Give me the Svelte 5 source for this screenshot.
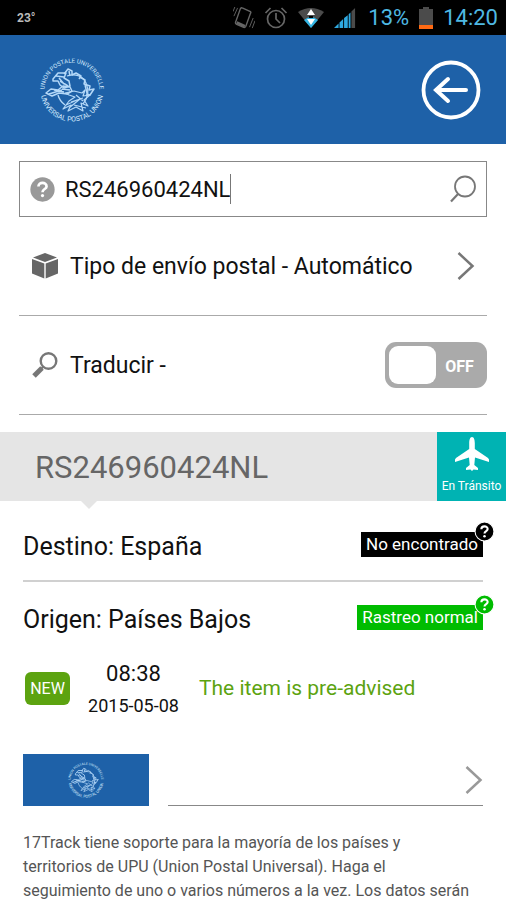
<script>
  let code = $state('RS246960424NL');
  let translate = $state(false);
  const year = '2015-05-08';
</script>

{#snippet emblem()}
  <svg class="emblem" viewBox="0 0 68 68" role="img" aria-label="Union Postale Universelle">
    <defs>
      <path id="arc-top" d="M7.100 40 A27.500 27.500 0 1 1 60.900 40" />
      <path id="arc-bottom" d="M2.500 34 A31.500 31.500 0 0 0 65.500 34" />
    </defs>
    <g class="ring">
      <text text-anchor="middle"><textPath href="#arc-top" startOffset="50%">UNION POSTALE UNIVERSELLE</textPath></text>
      <text class="lower" text-anchor="middle"><textPath href="#arc-bottom" startOffset="50%">UNIVERSAL POSTAL UNION</textPath></text>
    </g>
    <g class="figures">
      <path d="M29 20C37 17 45 20 48 27C51 34 50 42 45 48M20 39C21 43 23 46 27 49" stroke-width="1.300" />
      <path d="M8 37L13 33L20 34L25 30L32 31L34 35L29 38L21 37L14 40ZM11 38L24 34M16 34L26 36M24 33L32 34" stroke-width="1.500" />
      <path d="M15 23L20 17L28 17L26 22L31 25L32 30L26 32L22 29L20 25L15 25ZM18 20L26 21M22 25L30 30M21 22L26 28" stroke-width="1.500" />
      <path d="M26 18L30 13L34 15L34 19L38 17L43 20L41 23M31 15L32 20M42 21L47 24L46 28L52 30L51 34L56 33L52 39L48 38M47 29L49 37" stroke-width="1.500" />
      <path d="M27 37L36 35L44 37L47 34L45 40L52 39L46 44L50 50L43 47L45 55L38 51L30 55L33 49L25 53L31 45L37 41L31 39ZM33 46L45 42M31 52L42 43M36 49L48 52M28 49L39 44M38 39L45 45" stroke-width="1.200" />
    </g>
  </svg>
{/snippet}

{#snippet question(size)}
  <svg class={size} viewBox="0 0 20 20" aria-hidden="true">
    <circle class="disc" cx="10" cy="10" r="9" />
    <path d="M7 7.800C7 4.200 13 4.200 13 7.700C13 9.700 10 9.600 10 12" fill="none" stroke="#fff" stroke-width="2" />
    <circle cx="10" cy="14.500" r="1.200" fill="#fff" />
  </svg>
{/snippet}

{#snippet chevron(colour)}
  <svg class="chevron" viewBox="0 0 18 30" fill="none" stroke={colour} stroke-width="2.500" aria-hidden="true">
    <path d="M1.500 2L15.500 15L1.500 28" />
  </svg>
{/snippet}

<div class="page">
  <div class="status">
    <span class="temp">23°</span>
    <div class="tray">
      <svg width="22" height="24" viewBox="0 0 24 26" fill="none" stroke="#666" stroke-width="1.500" aria-hidden="true">
        <path d="M10 2L19 6Q20 7 19 8L14 22Q13 24 11 23L4 20Q2 19 3 17L8 3Q9 1.500 10 2Z" />
        <path d="M4 18L13 22" stroke-width="3" />
        <path d="M5 2L1 11M2 1L0 6M22 13L18 23M24 16L21 24" stroke-width="1" />
      </svg>
      <svg width="24" height="24" viewBox="0 0 24 24" fill="none" stroke="#666" stroke-width="1.700" aria-hidden="true">
        <circle cx="12" cy="13" r="8.500" /><path d="M12 7V13L16 17M1.500 7L6.500 2M17.500 2L22.500 7" />
      </svg>
      <svg width="28" height="24" viewBox="0 0 28 24" aria-hidden="true">
        <path d="M1 6Q14 -2 27 6L14 22Z" fill="#4b4b4b" />
        <path d="M7 14Q14 8 21 14L14 22Z" fill="#33b5e5" />
        <path d="M14 3L18 9H10ZM10 13H18L14 19Z" fill="#fff" /><path d="M12 10H16V12H12Z" fill="#000" />
      </svg>
      <svg width="22" height="24" viewBox="0 0 24 24" aria-hidden="true">
        <path d="M0 23L5 18V23ZM6 17L10 13V23H6ZM11 12L15 9V23H11ZM16 8L18 6V23H16Z" fill="#2fa9e0" />
        <path d="M19 5L23 1V23H19Z" fill="#4b4b4b" />
      </svg>
      <span class="clock pct">13%</span>
      <svg width="16" height="24" viewBox="0 0 16 24" aria-hidden="true">
        <path d="M5 1H11V3H15V19H1V3H5Z" fill="#4b4b4b" /><path d="M1 19H15V23H1Z" fill="#ff6a13" />
      </svg>
      <span class="clock">14:20</span>
    </div>
  </div>

  <header>
    <div class="brand">{@render emblem()}</div>
    <button class="back" aria-label="Volver">
      <svg viewBox="0 0 60 60" fill="none" stroke="#fff" aria-hidden="true">
        <circle cx="30" cy="30" r="27.500" stroke-width="3.800" />
        <path d="M45 30H16M27 19L15 30L27 41" stroke-width="4" stroke-linecap="round" />
      </svg>
    </button>
  </header>

  <main>
    <section class="form">
      <div class="search">
        {@render question('help')}
        <div class="entry">
          <input type="text" aria-label="Número de envío" bind:value={code} />
          <span class="caret"></span>
        </div>
        <button class="find" aria-label="Buscar">
          <svg viewBox="0 0 28 28" fill="none" stroke="#777" stroke-width="1.800" aria-hidden="true">
            <circle cx="16" cy="11.500" r="10" /><path d="M9 19L2 26.500" stroke-width="2.200" />
          </svg>
        </button>
      </div>
      <button class="option">
        <svg class="lead" viewBox="0 0 26 26" aria-hidden="true">
          <path d="M13 0L25 4.500L13 9L1 4.500ZM0 6L12.300 10.500V25.500L0 20.500ZM26 6L13.700 10.500V25.500L26 20.500Z" fill="#666" />
        </svg>
        <span>Tipo de envío postal - Automático</span>
        {@render chevron('#777')}
      </button>
      <label class="option">
        <svg class="lead" viewBox="0 0 26 26" fill="none" stroke="#777" aria-hidden="true">
          <circle cx="16.500" cy="9" r="7.800" stroke-width="2.400" />
          <path d="M10 16L2 24" stroke-width="5" /><path d="M11.500 14.500L9 17" stroke-width="2" />
        </svg>
        <span>Traducir -</span>
        <span class="toggle">
          <input type="checkbox" role="switch" bind:checked={translate} />
          <span class="knob"></span>
          <span class="state">{translate ? 'ON' : 'OFF'}</span>
        </span>
      </label>
    </section>

    <section class="band">
      <h1>{code}</h1>
      <div class="transit">
        <svg viewBox="0 0 36 36" fill="#fff" aria-hidden="true">
          <path d="M18 1C20 1 20.800 4 20.800 7V13L34 22Q35.500 23 35 26L21 21.500L20.300 29L24 32V34L19.500 33.500L18 35L16.500 33.500L12 34V32L15.700 29L15 21.500L1 26Q.5 23 2 22L15.200 13V7C15.200 4 16 1 18 1Z" />
        </svg>
        <span>En Tránsito</span>
      </div>
    </section>

    <section class="result">
      <div class="place">
        <h2>Destino: España</h2>
        <span class="tag missing">No encontrado{@render question('bubble')}</span>
      </div>
      <div class="place origin">
        <h2>Origen: Países Bajos</h2>
        <span class="tag normal">Rastreo normal{@render question('bubble')}</span>
      </div>
      <div class="event">
        <span class="new">NEW</span>
        <time><b>08:38</b><span>{year}</span></time>
        <p>The item is pre-advised</p>
      </div>
      <a class="carrier" href="#upu" aria-label="Union Postale Universelle">
        <span class="thumb">{@render emblem()}</span>
        <span class="rule">{@render chevron('#999')}</span>
      </a>
      <p class="about">17Track tiene soporte para la mayoría de los países y<br />territorios de UPU (Union Postal Universal). Haga el<br />seguimiento de uno o varios números a la vez. Los datos serán</p>
    </section>
  </main>
</div>

<style>
  :global(body) { margin: 0; background: #fff; }
  .page { font-family: Roboto, "Noto Sans", sans-serif; color: #111; height: 100vh; overflow: hidden; }
  svg { display: block; flex: none; }
  button, input { font: inherit; color: inherit; background: none; border: 0; padding: 0; margin: 0; }
  h1, h2, p { margin: 0; font-weight: 400; }

  .status { background: #000; height: 35px; display: flex; align-items: center; justify-content: space-between; padding: 0 8px 0 17px; }
  .temp { color: #bbb; font-size: 12px; font-weight: 700; }
  .tray { display: flex; align-items: center; gap: 9px; }
  .clock { color: #4fb9e3; font-size: 22px; line-height: 35px; }
  .pct { margin-left: 3px; }

  header { background: #1e61a8; height: 109px; display: flex; align-items: center; justify-content: space-between; padding: 0 25px 0 38px; }
  .brand { width: 68px; }
  .emblem { width: 100%; overflow: visible; }
  .ring text { font-size: 6px; fill: #d4eafd; }
  .ring .lower { font-size: 7px; }
  .figures { fill: none; stroke: #b4d8f8; stroke-linejoin: round; }
  .back { width: 60px; height: 60px; cursor: pointer; }

  .form { padding: 17px 19px 0; }
  .search { border: 1px solid #888; height: 54px; display: flex; align-items: center; padding: 0 9px; }
  .help { width: 27px; height: 27px; }
  .help .disc { fill: #999; }
  .entry { flex: 1; display: flex; align-items: center; min-width: 0; margin-left: 9px; font-size: 22px; }
  .entry input { field-sizing: content; outline: none; min-width: 0; height: 30px; }
  .caret { width: 1px; height: 30px; background: #777; }
  .find { width: 28px; height: 28px; cursor: pointer; }
  .option { width: 100%; height: 99px; display: flex; align-items: center; border-bottom: 1px solid #aaa; font-size: 23px; text-align: left; padding-left: 13px; box-sizing: border-box; cursor: pointer; }
  .option > span:not(.toggle) { flex: 1; }
  .lead { width: 26px; height: 26px; margin-right: 12px; }
  .chevron { width: 18px; height: 30px; margin-right: 12px; }
  .toggle { position: relative; width: 102px; height: 46px; border-radius: 11px; background: #aaa; display: flex; align-items: center; padding: 4px; box-sizing: border-box; }
  .toggle input { position: absolute; inset: 0; width: 100%; height: 100%; opacity: 0; cursor: pointer; }
  .knob { width: 47px; height: 38px; border-radius: 9px; background: #fff; }
  .state { flex: 1; text-align: center; color: #fff; font-size: 16px; font-weight: 700; padding-top: 3px; }
  .toggle:has(input:checked) { flex-direction: row-reverse; background: #5ca310; }

  .band { margin-top: 17px; position: relative; display: flex; background: #e5e5e5; height: 69px; }
  .band::after { content: ""; position: absolute; left: 81px; top: 100%; border: 8px solid transparent; border-top-color: #e5e5e5; border-bottom: 0; }
  h1 { flex: 1; padding-left: 35px; font-size: 31px; line-height: 71px; color: #666; }
  .transit { width: 69px; background: #00b3b3; color: #fff; display: flex; flex-direction: column; align-items: center; padding-top: 4px; box-sizing: border-box; font-size: 12px; line-height: 16px; white-space: nowrap; }
  .transit svg { width: 36px; height: 36px; margin-bottom: 6px; }

  .result { padding: 0 23px; }
  .place { display: flex; align-items: center; justify-content: space-between; height: 81px; padding-top: 12px; box-sizing: border-box; border-bottom: 2px solid #d0d0d0; }
  .origin { height: 74px; padding-top: 0; border: 0; }
  h2 { font-size: 25px; }
  .tag { position: relative; color: #fff; font-size: 17px; line-height: 25px; padding: 0 5px; margin-bottom: 4px; }
  .missing { background: #000; }
  .normal { background: #00bc00; }
  .bubble { position: absolute; right: -12px; top: -11px; width: 21px; height: 21px; }
  .bubble .disc { stroke: #fff; stroke-width: 1; }
  .missing .disc { fill: #000; }
  .normal .disc { fill: #00bc00; }

  .event { display: flex; align-items: center; height: 64px; padding-left: 2px; }
  .new { background: #5ca310; color: #fff; border-radius: 6px; width: 45px; text-align: center; font-size: 16px; line-height: 33px; }
  time { width: 95px; margin: 0 18px 0 16px; padding-top: 3px; display: flex; flex-direction: column; align-items: center; font-size: 18px; line-height: 32px; white-space: nowrap; }
  time b { font-size: 22px; font-weight: 400; }
  .event p { color: #5ca310; font-size: 21px; }

  .carrier { display: flex; margin-top: 34px; gap: 19px; height: 52px; }
  .thumb { width: 126px; background: #1e61a8; display: flex; align-items: center; justify-content: center; }
  .thumb .emblem { width: 38px; }
  .rule { flex: 1; border-bottom: 1px solid #888; display: flex; align-items: center; justify-content: flex-end; }
  .rule .chevron { margin-right: 0; }
  .about { margin-top: 25px; font-size: 16px; line-height: 24px; color: #555; }
</style>
